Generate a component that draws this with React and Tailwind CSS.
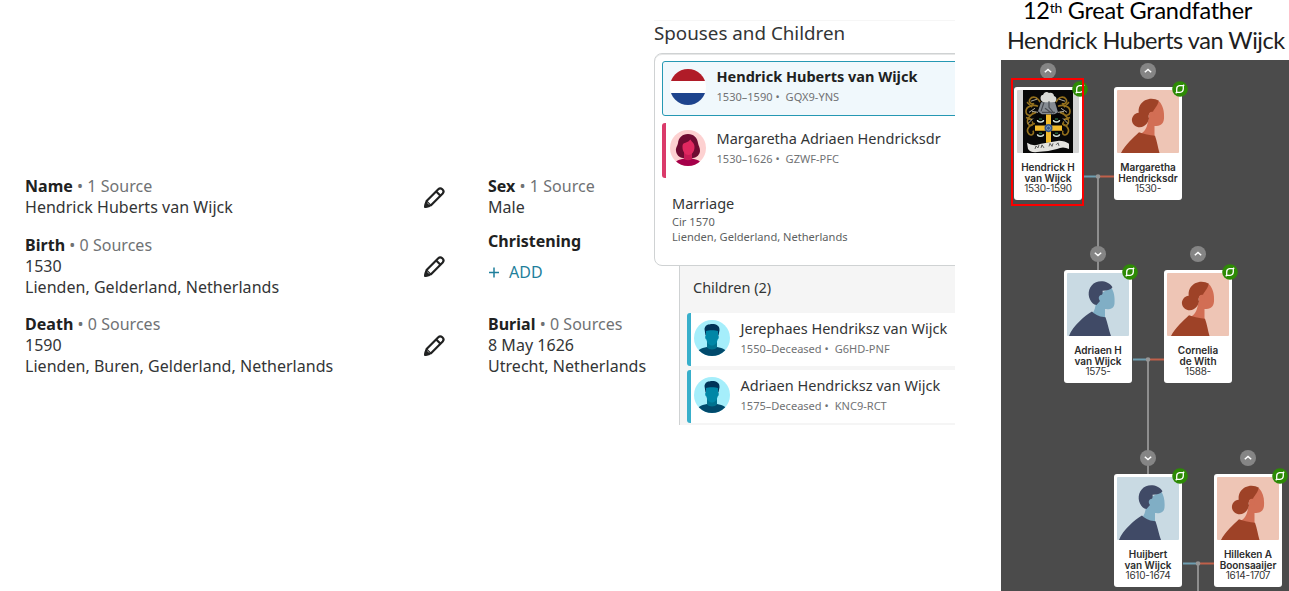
import React from "react";

const Pencil = ({ className }) => (
  <svg className={className} width="21" height="21" viewBox="0 0 21 21" fill="none" stroke="#202121" strokeWidth="2.200" strokeLinejoin="round">
    <path d="M1.200 19.800 2.600 14 14.300 2.200Q16.200.400 18.300 2.300 20.600 4.400 18.700 6.500L7 18.200Z" />
    <path d="M12.200 4.500 16.500 8.700" />
    <path d="M2.800 14.200 6.800 18.200" strokeWidth="1.200" />
    <path d="M1.200 19.800 1.900 16.200 4.800 19.100Z" fill="#202121" />
  </svg>
);

const Fact = ({ label, sources, lines, className = "" }) => (
  <div className={`text-[16px] leading-[21px] tracking-[0.030px] whitespace-nowrap text-[#333536] ${className}`}>
    <div>
      <b className="font-bold text-[#202121]">{label}</b>
      {sources && <span className="text-[#707274]"> • {sources}</span>}
    </div>
    {lines.map((l) => (
      <div key={l}>{l}</div>
    ))}
  </div>
);

const Flag = () => (
  <svg width="36" height="36" viewBox="0 0 36 36" className="shrink-0">
    <clipPath id="flag"><circle cx="18" cy="18" r="18" /></clipPath>
    <g clipPath="url(#flag)">
      <path fill="#fff" d="M0 0h36v36H0z" />
      <path fill="#b01c28" d="M0 0h36v12H0z" />
      <path fill="#1e448d" d="M0 24h36v12H0z" />
    </g>
  </svg>
);

const WomanAvatar = () => (
  <svg width="36" height="36" viewBox="0 0 36 36" className="shrink-0">
    <clipPath id="woman"><circle cx="18" cy="18" r="18" /></clipPath>
    <g clipPath="url(#woman)">
      <path fill="#fdd1d1" d="M0 0h36v36H0z" />
      <path fill="#6f0b32" d="M18 4C12 4 8.500 8 8 13c-.4 3-2.500 4.500-2 8 .4 3.500 3 6.500 7 7h10c4-.5 6.800-3.500 7-7 .2-3.500-1.600-5-2-8-.6-5-4-9-10-9Z" />
      <path fill="#a5004a" d="M4 36c0-5 5-6.500 10-7.500h8c5 1 10 2.500 10 7.500Z" />
      <path fill="#c91c57" d="M14 22h8v6.500c0 2.200-8 2.200-8 0Z" />
      <path fill="#e02860" d="M12.500 17c0-3 .8-3.500 3-4.200 2.500-.8 3.500-1.600 4.800-3.200 1.500 2.500 4.200 3.400 4.200 7.400 0 4.500-2.700 8-6 8s-6-3.500-6-8Z" />
    </g>
  </svg>
);

const ManAvatar = () => (
  <svg width="36" height="36" viewBox="0 0 36 36" className="shrink-0">
    <clipPath id="man"><circle cx="18" cy="18" r="18" /></clipPath>
    <g clipPath="url(#man)">
      <path fill="#a5eefb" d="M0 0h36v36H0z" />
      <path fill="#014a6c" d="M2 36c0-6 5-8 11-9h10c6 1 11 3 11 9Z" />
      <path fill="#00728f" d="M13 20h10v7.500c-2 2.500-8 2.500-10 0Z" />
      <path fill="#003459" d="M11.500 15.500 10.500 9C11 5 14 4.500 16 4.200c4-.8 10 .3 9.500 6l-1 5.300Z" />
      <path fill="#0086a6" d="M12 11c2-1 10-1 12 0v4.500c1.200 0 1 3.500-.4 4-.6 3.500-2.600 6-5.600 6s-5-2.500-5.600-6c-1.400-.5-1.600-4-.4-4Z" />
    </g>
  </svg>
);

const Person = ({ avatar, name, dates, id, bold }) => (
  <>
    {avatar}
    <div className="ml-[10.500px] whitespace-nowrap">
      <div className={bold ? "h-[21px] text-[14.500px] leading-[21px] font-bold text-[#202121]" : "text-[14.500px] leading-[21px] text-[#333536]"}>{name}</div>
      <div className="text-[11.050px] leading-[20px] text-[#707274]">
        {dates} •<span className="ml-[6px]">{id}</span>
      </div>
    </div>
  </>
);

const Child = (props) => (
  <div className="flex h-[53px] rounded-l-[3px] border-l-[4px] border-[#38afcb] bg-white pt-[5px] pl-[3px]">
    <Person avatar={<div className="pt-[2px]"><ManAvatar /></div>} {...props} />
  </div>
);

const MalePortrait = () => (
  <svg width="62" height="63" viewBox="0 0 62 62" preserveAspectRatio="none">
    <rect width="62" height="62" rx="1" fill="#c9dae3" />
    <path fill="#80aec5" d="M31 22 44 14c3 4 4 10 3.500 16-.5 5-4 6-9.500 5.500V45L25 40c3-3 3.500-7 4-12Z" />
    <path fill="#404a66" d="M2 62C6 52 18 42 25 38c4 4 9 5.500 13.500 5.500C40.500 49 42 57 44 62Z" />
    <path fill="#404a66" d="M45.500 14C42 8 34 7 29 9c-7 3-9 11-6 17 1.300 3 3.500 5 6.500 5.500l3.500-4c-2-2-1.500-6 2-6 .5-1 1-2.500.5-4 4 0 8-1 10-3.500Z" />
  </svg>
);

const FemalePortrait = () => (
  <svg width="62" height="63" viewBox="0 0 62 62" preserveAspectRatio="none">
    <rect width="62" height="62" rx="1" fill="#eec5b5" />
    <path fill="#d26e54" d="M42 11c4 4 5.500 10 5 17-.5 6-4 7.500-9.500 7.500V46L24 43c5-3 6-7 7-12l3-12Z" />
    <path fill="#9e4227" d="M4 62c4-8 12-15 18-20.500C27 43 33 44.500 38 45c2 5 3 12 4.500 17Z" />
    <path fill="#9e4227" d="M42 10.500C36 7 27 8 23 15c-1.500 3-1.500 5-1.300 7.500C17 23 14.500 27 15 30.500c.7 5 7 8 12 5 3-2 4-4 5-7.500-1-3 0-6 4-6.500 1-3 4-5 6-11Z" />
    <circle cx="35" cy="24.500" r="3" fill="#d26e54" />
  </svg>
);

const Arms = () => (
  <svg width="62" height="63" viewBox="0 0 62 62" preserveAspectRatio="none">
    <rect width="62" height="62" rx="1" fill="#d4d4d4" />
    <path fill="#080808" d="M6 0h50v62H6z" />
    <g fill="none" stroke="#94701c" strokeWidth="1.600">
      <path d="M23 12c-3-6-8-6-10-3s2 6 4 4M21 16c-5-2-12 0-12 5s6 5 7 1M19 22c-6 2-10 7-8 11s7 1 4-2M18 33c-5 1-9 5-7 9s7 2 5-2M10 12l5 5M9 27l6 2" />
      <path d="M39 12c3-6 8-6 10-3s-2 6-4 4M41 16c5-2 12 0 12 5s-6 5-7 1M43 22c6 2 10 7 8 11s-7 1-4-2M44 33c5 1 9 5 7 9s-7 2-5-2M52 12l-5 5M53 27l-6 2" />
    </g>
    <g fill="none" stroke="#d5d0bd" strokeWidth=".8">
      <path d="M20 9l-6 2M18 18l-6 4M16 28l-5 5M42 9l6 2M44 18l6 4M46 28l5 5M41 22l6-1M21 22l-6-1" />
    </g>
    <path fill="#d9dad6" d="M24 10c-1-3 0-5 2-5 1-3 4-4 6-2 3-1 5 1 5 3 3 1 3 4 1 6l-4 1h-7Z" />
    <path fill="#858b92" d="M24 12h14l3 10-4 2H25l-4-3Z" />
    <path d="M27 12l-3 9M32 11v6l5 6M28 18l7 5M25 22h13" stroke="#484c52" strokeWidth="1.200" fill="none" />
    <path fill="#050505" d="M18 24h27v18q-1 6-13.500 9Q19 48 18 42Z" />
    <path fill="#f2bb2c" d="M29 24h5v28h-5z M18 35h27v5H18z" />
    <circle cx="31.500" cy="37.500" r="4" fill="#315386" />
    <circle cx="31.500" cy="37.500" r="2" fill="none" stroke="#86a6bf" strokeWidth=".8" />
    <path d="M20.500 29.500q0 2 3 2t3-2M36.500 29.500q0 2 3 2t3-2M20.500 43.500q0 2 3 2t3-2M36.500 43.500q0 2 3 2t3-2" fill="none" stroke="#d7e6dc" strokeWidth="1.400" />
    <path d="M22 28.500h3M38 28.500h3M22 42.500h3M38 42.500h3" stroke="#22603a" strokeWidth="1.500" />
    <path fill="#e4e3df" d="M10 52q6 4 14 1l18-3q6 0 10 3v5q-6-3-12 0-10 3-20 3-6 1-9-3Z" />
    <path d="M18 58l1-3 2 2 1-3M24 57l1-3 2 3M32 55.500l1-3 2 3 1-3M39 54l2-2 1 3" stroke="#4e4e4e" strokeWidth=".9" fill="none" />
  </svg>
);

const Leaf = () => (
  <svg width="16" height="16" viewBox="0 0 16 16" className="absolute -top-[6px] -right-[6px]">
    <circle cx="8" cy="8" r="7.800" fill="#2d8a05" />
    <path d="M11.300 4.700H7.500Q4.700 5 4.700 8v3.300h3.400q3.100-.3 3.200-3.300ZM3.700 12.200l1.500-1.500M12.200 3.800l-1 1" fill="none" stroke="#fff" strokeWidth="1.300" />
  </svg>
);

const TreeCard = ({ place, portrait, first, second, years }) => (
  <div className={`absolute h-[112.500px] w-[68.400px] rounded-[3px] bg-white pt-[3px] pl-[3px] ${place}`}>
    {portrait}
    <Leaf />
    <div className="mt-[9px] -ml-[3px] w-[68px] text-center text-[10px] leading-[10.500px] font-semibold tracking-[-0.030px] whitespace-nowrap text-[#2c2c2c]">
      <div className="-mx-1">{first}</div>
      <div className="-mx-1">{second}</div>
      <div className="leading-[11px] font-normal tracking-[-0.250px] text-[#333]">{years}</div>
    </div>
  </div>
);

const Toggle = ({ place, down }) => (
  <svg width="16" height="16" viewBox="0 0 16 16" className={`absolute ${place}`}>
    <circle cx="8" cy="8" r="8" fill="#858585" />
    <path d={down ? "M4.800 6.800 8 9.500l3.200-2.700" : "M4.800 9.300 8 6.500l3.200 2.800"} fill="none" stroke="#fff" strokeWidth="1.500" />
  </svg>
);

export default function App() {
  return (
    <div className="flex h-[591px] w-[1289px] overflow-hidden bg-white font-['Noto_Sans',sans-serif]">
      <section className="flex w-[654px] shrink-0 pt-[176px] pl-[25px]">
        <div className="w-[399px]">
          <Fact label="Name" sources="1 Source" lines={["Hendrick Huberts van Wijck"]} />
          <Fact className="mt-[17px]" label="Birth" sources="0 Sources" lines={["1530", "Lienden, Gelderland, Netherlands"]} />
          <Fact className="mt-[16px]" label="Death" sources="0 Sources" lines={["1590", "Lienden, Buren, Gelderland, Netherlands"]} />
        </div>
        <div className="flex w-[64px] flex-col pt-[11px]">
          <Pencil />
          <Pencil className="mt-[48px]" />
          <Pencil className="mt-[58px]" />
        </div>
        <div>
          <Fact label="Sex" sources="1 Source" lines={["Male"]} />
          <Fact className="mt-[13px]" label="Christening" lines={[]} />
          <div className="mt-[10px] flex items-center text-[16px] leading-[21px] text-[#1f7f9c]">
            <svg width="11" height="11" viewBox="0 0 11 11" stroke="#1f7f9c" strokeWidth="1.500"><path d="M1 5.500h10M6 .5v10" /></svg>
            <span className="ml-[10px]">ADD</span>
          </div>
          <Fact className="mt-[31px]" label="Burial" sources="0 Sources" lines={["8 May 1626", "Utrecht, Netherlands"]} />
        </div>
      </section>

      <section className="mt-[20px] h-[405px] w-[301px] shrink-0 overflow-hidden border-t border-[#f6f6f6]">
        <h2 className="h-[32px] text-[18.800px] leading-[25px] whitespace-nowrap text-[#333536]">Spouses and Children</h2>
        <div className="h-[213px] w-[320px] rounded-[8px] border border-[#cfd2d3] bg-white pt-[7px] pl-[7px] shadow-[inset_0_1px_0_#e6e7e7]">
          <div className="flex h-[55px] rounded-[3px] border border-[#2598b3] bg-[#f0f8fc] pt-[4px] pl-[7px]">
            <Person bold avatar={<div className="pt-[3px]"><Flag /></div>} name="Hendrick Huberts van Wijck" dates="1530–1590" id="GQX9-YNS" />
          </div>
          <div className="mt-[7px] flex h-[55px] rounded-l-[3px] border-l-[4px] border-[#da3a6a] pt-[5px] pl-[4px]">
            <Person avatar={<div className="pt-[2px]"><WomanAvatar /></div>} name="Margaretha Adriaen Hendricksdr" dates="1530–1626" id="GZWF-PFC" />
          </div>
          <div className="mt-[15px] pl-[10px] text-[11.100px] leading-[15px] text-[#5d5f61]">
            <div className="text-[14.500px] leading-[21px] text-[#333536]">Marriage</div>
            <div>Cir 1570</div>
            <div>Lienden, Gelderland, Netherlands</div>
          </div>
        </div>
        <div className="ml-[25px] h-[160px] border-l border-[#cfd2d3] bg-[#f5f5f5] pt-[11px] pl-[7px]">
          <div className="h-[36px] pl-[6px] text-[14.500px] leading-[21px] text-[#333536]">Children (2)</div>
          <div className="flex flex-col gap-[4px]">
            <Child name="Jerephaes Hendriksz van Wijck" dates="1550–Deceased" id="G6HD-PNF" />
            <Child name="Adriaen Hendricksz van Wijck" dates="1575–Deceased" id="KNC9-RCT" />
          </div>
        </div>
      </section>

      <section className="ml-[46px] w-[288px] shrink-0">
        <div className="h-[60px] font-['Lato',sans-serif] text-[23.500px] whitespace-nowrap text-black">
          <div className="h-[26px] pl-[22px] leading-[20px] tracking-[-0.270px]">
            12<sup className="relative -top-[6px] align-baseline text-[14px] leading-none">th</sup> Great Grandfather
          </div>
          <div className="pl-[6px] leading-[28px] tracking-[-0.460px] text-[#202020]">Hendrick Huberts van Wijck</div>
        </div>
        <div className="relative h-[531px] overflow-hidden bg-[#4b4b4b] font-['Inter',sans-serif]">
          <svg width="288" height="531" className="absolute top-0 left-0" fill="none" strokeWidth="2">
            <path stroke="#6e9db0" d="M82 116.500h15M132 299.500h15M182 503.500h15" />
            <path stroke="#c0604a" d="M97 116.500h16M147 299.500h16M197 503.500h16" />
            <path stroke="#8e8e8e" d="M97 117v93M147 300v114M197 504v27" />
            <g fill="#969696"><circle cx="97" cy="116.500" r="2.300" /><circle cx="147" cy="299.500" r="2.300" /><circle cx="197" cy="503.500" r="2.300" /></g>
          </svg>
          <Toggle place="top-[3px] left-[39px]" />
          <Toggle place="top-[3px] left-[139px]" />
          <Toggle place="top-[186px] left-[89px]" down />
          <Toggle place="top-[186px] left-[189px]" />
          <Toggle place="top-[390px] left-[139px]" down />
          <Toggle place="top-[390px] left-[239px]" />
          <TreeCard place="top-[27px] left-[13px]" portrait={<Arms />} first="Hendrick H" second="van Wijck" years="1530-1590" />
          <TreeCard place="top-[27px] left-[113px]" portrait={<FemalePortrait />} first="Margaretha" second="Hendricksdr" years="1530-" />
          <TreeCard place="top-[210px] left-[63px]" portrait={<MalePortrait />} first="Adriaen H" second="van Wijck" years="1575-" />
          <TreeCard place="top-[210px] left-[163px]" portrait={<FemalePortrait />} first="Cornelia" second="de With" years="1588-" />
          <TreeCard place="top-[414px] left-[113px]" portrait={<MalePortrait />} first="Huijbert" second="van Wijck" years="1610-1674" />
          <TreeCard place="top-[414px] left-[213px]" portrait={<FemalePortrait />} first="Hilleken A" second="Boonsaaijer" years="1614-1707" />
          <div className="absolute top-[18px] left-[10px] h-[128px] w-[73px] border-2 border-[#fb0000]" />
        </div>
      </section>
    </div>
  );
}
